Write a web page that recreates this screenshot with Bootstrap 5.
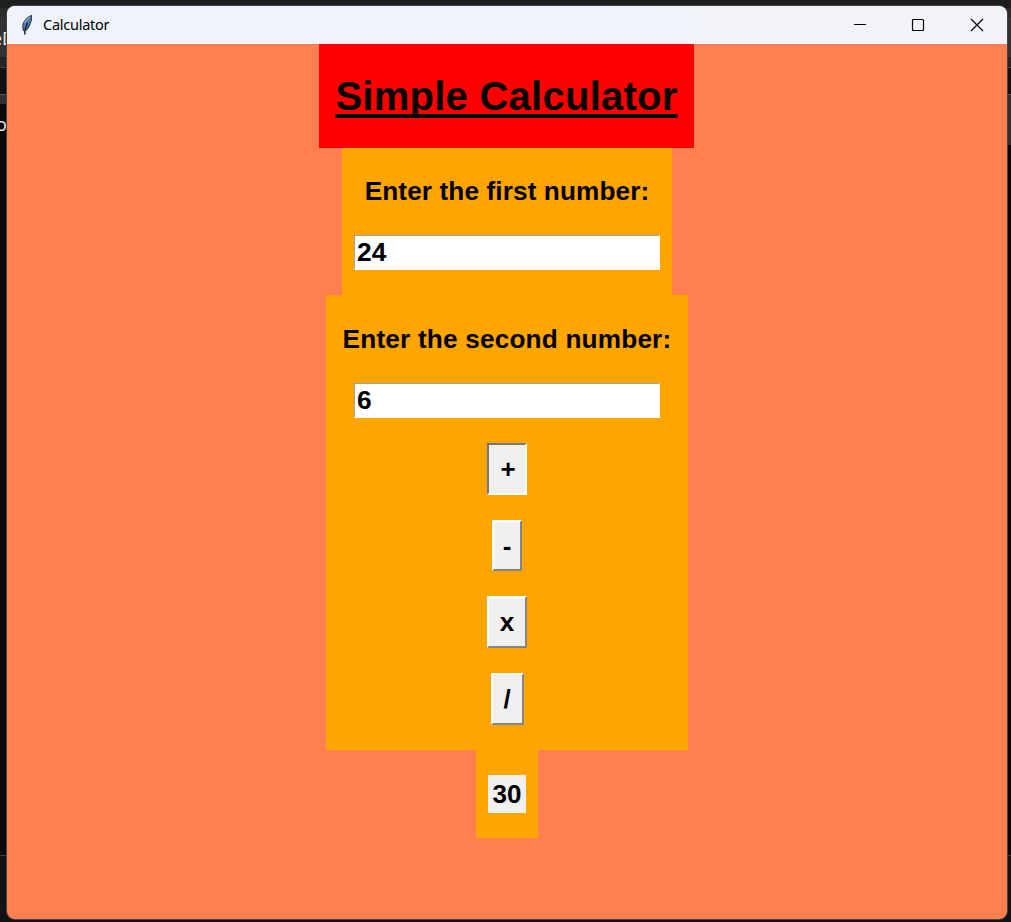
<!DOCTYPE html>
<html lang="en">
<head>
<meta charset="utf-8">
<title>Calculator</title>
<link rel="stylesheet" href="https://cdn.jsdelivr.net/npm/bootstrap@5.3.0/dist/css/bootstrap.min.css">
<style>
html,body{height:922px;overflow:hidden}
body{background:linear-gradient(#1e1e1e 8px,#2b2b2b 8px 17px,#323232 17px 57px,#232323 57px 67px,#444 67px 68px,#111 68px 94px,#555 94px 95px,#303030 95px 104px,#080808 104px 855px,#3a3a3a 855px 856px,#121212 856px);color:#000;font-family:"Liberation Sans",Arial,sans-serif}
.desk{padding:6px 4px 3px 7px;height:922px}
.desk::after{content:"";position:absolute;right:0;top:95px;width:4px;height:50px;background:#303030}
.behind{position:absolute;left:-8px;color:#eee;font:18px/20px "Open Sans",sans-serif;white-space:nowrap}
.win{position:relative;z-index:1;height:913px;border-radius:8px;overflow:hidden;background:#ff7f50;box-shadow:0 0 0 1px #444}
.titlebar{height:38px;background:linear-gradient(90deg,#eff4fc 60%,#f1f3f9 70%);padding-left:11px}
.titlebar .cap{font:14.5px/36px "Noto Sans","Open Sans",sans-serif;height:38px;letter-spacing:-.25px;margin-left:8px}
.titlebar .ctl{width:58.5px;display:flex;justify-content:center;position:relative;left:-1px}
.heading{width:375px;height:104px;background:red;font-size:40px;font-weight:700;letter-spacing:.25px;line-height:105px;margin:0 1px 0 0;text-align:center;text-decoration:underline;text-decoration-thickness:4px;text-underline-offset:4px;text-decoration-skip-ink:none}
.pane{background:orange;font-size:26px;font-weight:700}
.pane-a{width:330px;height:147px}
.pane-b{width:362px;height:455px}
.pane-c{width:62px;height:88px;padding-top:25px}
.prompt{height:88px;line-height:88px;letter-spacing:.18px;white-space:nowrap;font-size:26.2px}
.pane-a .prompt{height:87px;line-height:86px;letter-spacing:.1px}
.entry{width:306px;height:35px;border:1px solid;border-color:#a0a0a0 #fff #fff #a0a0a0;border-radius:0;padding:0 2px;background:#fff;color:#000;font-weight:700;font-size:26.3px;line-height:33px;outline:0}
.key{border:2px solid;border-color:#fff #858585 #858585 #fff;border-radius:0;background:#f0f0f0;color:#000;font-weight:700;font-size:26px;padding:0;line-height:48px;height:52px;display:flex;justify-content:center}
.key.sunken{border-color:#777 #fff #fff #777;padding:0 0 0 2px}
.result{width:38px;height:38px;line-height:38px;background:#f0f0f0;text-align:center}
</style>
</head>
<body>
<span class="behind" style="top:28px">eD</span>
<span class="behind" style="top:114px;left:-4px">o</span>
<div class="desk">
<main class="win d-flex flex-column align-items-center">
<header class="titlebar d-flex align-items-center w-100 flex-shrink-0">
<svg width="17" height="24" viewBox="0 0 17 24"><path d="M5.500 17.500Q3.500 12 7 7.500Q10 3.500 13.500 2.500Q14 6 12 11Q10 16 7.500 17.500Z" fill="#4b86c4" stroke="#3b4148" stroke-width="1.200"/><path d="M7 17L9.500 9.500" fill="none" stroke="#16283a" stroke-width="1.600"/><path d="M6.800 17V21.500" fill="none" stroke="#333" stroke-width="1.600"/><path d="M6.500 10Q8.500 5.500 12 3.800" fill="none" stroke="#a9b9c6"/></svg>
<span class="cap">Calculator</span>
<div class="d-flex ms-auto">
<span class="ctl"><svg width="14" height="14"><path d="M1 6.500H13" stroke="#000"/></svg></span>
<span class="ctl"><svg width="14" height="14"><rect x="1.500" y="1.500" width="11" height="11" rx="1" fill="none" stroke="#000" stroke-width="1.200"/></svg></span>
<span class="ctl"><svg width="14" height="14"><path d="M1 1L13 13M13 1L1 13" stroke="#000" stroke-width="1.200"/></svg></span>
</div>
</header>
<h1 class="heading">Simple Calculator</h1>
<section class="pane pane-a d-flex flex-column align-items-center">
<label class="prompt" for="first">Enter the first number:</label>
<input class="entry" id="first" value="24">
</section>
<section class="pane pane-b d-flex flex-column align-items-center">
<label class="prompt" for="second">Enter the second number:</label>
<input class="entry" id="second" value="6">
<div class="d-flex flex-column align-items-center" style="gap:25px;margin-top:25px">
<button class="key sunken" style="width:40px">+</button>
<button class="key" style="width:30px;height:51px">-</button>
<button class="key" style="width:40px">x</button>
<button class="key" style="width:33px">/</button>
</div>
</section>
<section class="pane pane-c d-flex flex-column align-items-center"><output class="result">30</output></section>
</main>
</div>
<script src="https://cdn.jsdelivr.net/npm/bootstrap@5.3.0/dist/js/bootstrap.bundle.min.js"></script>
</body>
</html>
